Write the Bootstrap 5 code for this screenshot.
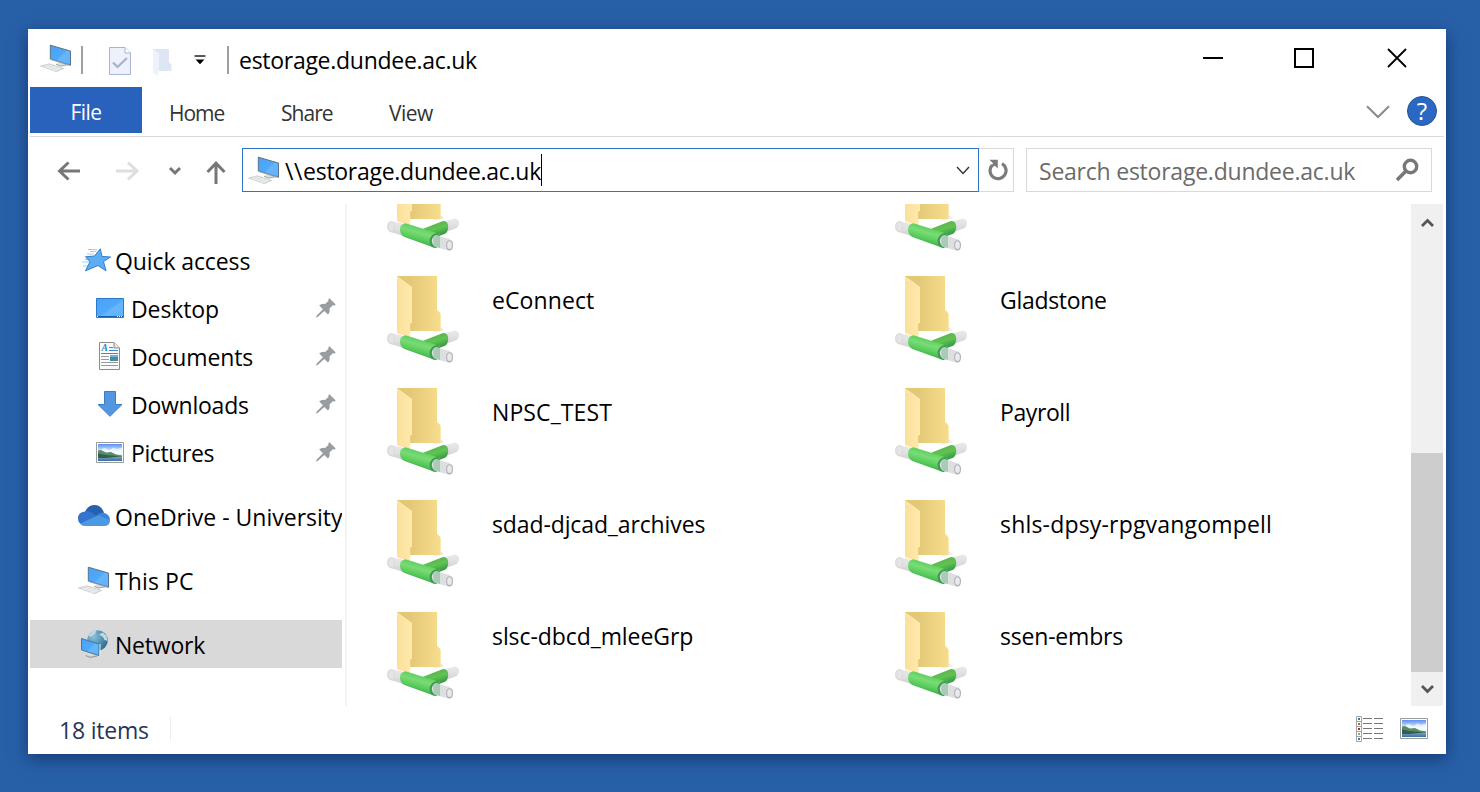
<!DOCTYPE html>
<html lang="en">
<head>
<meta charset="utf-8">
<title>estorage.dundee.ac.uk</title>
<link href="https://cdn.jsdelivr.net/npm/bootstrap@5.3.0/dist/css/bootstrap.min.css" rel="stylesheet">
<style>
body{background:#2860a8;font-family:"Open Sans",sans-serif;font-size:23px;line-height:1;color:#000;height:792px;overflow:hidden}
svg{display:block;flex:none}
.win{margin:29px 34px 0 28px;width:1418px;height:725px;background:#fff;box-shadow:0 5px 16px rgba(0,20,60,.5)}
.titlebar{height:58px;padding-left:13px}
.vbar{width:2px;height:28px;background:#a0a0a0}
.ribbon{height:50px;border-bottom:1px solid #d9dadb;margin:0 2px;font-size:21px;color:#333}
.filetab{width:112px;height:46px;background:#2862bd;color:#fff;padding:4px 0 0;letter-spacing:-.5px}
.addr{height:67px}
.field{height:44px;margin-top:11px;border:1px solid #d9d9d9}
.path{width:737px;border-color:#2f74c8;padding-left:6px}
.caret{width:1px;height:32px;background:#000}
.search{width:406px;color:#6b6b6b;padding-left:12px}
.tight{letter-spacing:-.28px}
.main{height:502px}
.side{width:314px;padding:32px 0 0 2px;letter-spacing:-.1px}
.item{height:48px;line-height:50px;white-space:nowrap;overflow:hidden}
.item.sub{padding-left:66px}
.item.top{padding-left:48px}
.sel{background:#d9d9d9}
.pinic{margin-right:6px}
.divide{width:2px;background:#f4f4f5;margin-left:3px}
.files{padding-left:40px}
.files .row{margin:0;height:112px}
.shift{margin-top:-40px}
.cell{width:508px}
.cell span{margin-left:33px;margin-top:13px}
.scroll{width:32px;background:#f0f0f0;margin-right:3px}
.thumb{height:219px;background:#cdcdcd;margin-top:212px}
.status{height:48px;color:#263559}
.t{white-space:pre;display:block}
.help{width:30px;height:30px;margin:9px 7px 0 17px;background:#2b68c3;border:1px solid #27548f;color:#fff;font-size:24px;line-height:28px;text-align:center}
</style>
</head>
<body>
<svg width="0" height="0" class="position-absolute">
<defs>
<linearGradient id="scr" x1="0" y1="0" x2="1" y2="1"><stop offset="0" stop-color="#47a2f8"/><stop offset=".5" stop-color="#50a8fa"/><stop offset=".58" stop-color="#66b6fc"/><stop offset="1" stop-color="#5fb1fc"/></linearGradient>
<linearGradient id="fb" x1="0" x2="1"><stop offset=".3" stop-color="#e5c877"/><stop offset="1" stop-color="#f6dd8c"/></linearGradient>
<linearGradient id="ff" x1="0" x2="1"><stop offset="0" stop-color="#fbe09b"/><stop offset="1" stop-color="#ffe9ad"/></linearGradient>
<linearGradient id="gr" gradientUnits="userSpaceOnUse" x1="33" y1="63" x2="28.500" y2="79"><stop offset="0" stop-color="#5fce5f"/><stop offset=".35" stop-color="#78dc77"/><stop offset=".7" stop-color="#5bcb5d"/><stop offset="1" stop-color="#3fb048"/></linearGradient>
<linearGradient id="gb" gradientUnits="userSpaceOnUse" x1="46" y1="60" x2="50" y2="73"><stop offset="0" stop-color="#56b84c"/><stop offset=".4" stop-color="#62c352"/><stop offset="1" stop-color="#2f9643"/></linearGradient>
<linearGradient id="wh" x1="0" y1="0" x2="0" y2="1"><stop offset="0" stop-color="#e8e8ea"/><stop offset=".5" stop-color="#e0e1e3"/><stop offset="1" stop-color="#cfd1d3"/></linearGradient>
<linearGradient id="sky" x1="0" y1="0" x2="0" y2="1"><stop offset="0" stop-color="#5b8ff2"/><stop offset=".7" stop-color="#e8f4fd"/></linearGradient>
<linearGradient id="sea" x1="0" y1="0" x2="0" y2="1"><stop offset="0" stop-color="#8fb3d6"/><stop offset="1" stop-color="#3a6f9e"/></linearGradient>
<radialGradient id="globe" cx=".3" cy=".3" r=".8"><stop offset="0" stop-color="#8fc0d8"/><stop offset=".6" stop-color="#4d8fb2"/><stop offset="1" stop-color="#2d668a"/></radialGradient>
<symbol id="pc" viewBox="0 0 32 28">
<path d="M.5 22 9.500 19.800 23.500 24.600 16.500 27.700Z" fill="#d3d6d8" stroke="#bbbfc2" stroke-width=".6"/>
<path d="M5 21.300 19.500 26M3.200 22 17.500 26.800M7.500 20.600 21.500 25.200M5 24 12 21M9 25.400 16 22.400M13 26.800 20 23.600" stroke="#f4f4f5" stroke-width=".7" fill="none"/>
<path d="M15.500 20 20 18.500 27.500 20.500 20.500 22.800Z" fill="#dcdfe0"/><path d="M16 20.300 20.500 22 28 20.800" stroke="#a3a8ab" fill="none"/>
<path d="M10.300 1.200 30.500 7.100V21.200L10.300 15Z" fill="url(#scr)" stroke="#55738a" stroke-width="1"/>
<path d="M10.500 15.500 30.600 21.600" stroke="#9da9b0" stroke-width=".8"/>
</symbol>
<symbol id="folder" viewBox="0 0 72 87">
<path d="M53 51 58 54 45 57Z" fill="#ececee"/>
<path d="M10 0H40V34L43.400 37.500V55H22Z" fill="url(#fb)"/>
<path d="M10 .5H40" stroke="#f0d78f"/>
<path d="M10 0 25 10.500V46.500L23.300 48V61.500L18 60 10 57Z" fill="url(#ff)"/>
<path d="M10 1 25 11.300V47" fill="none" stroke="#fff0bd" stroke-width=".7"/>
<path d="M40 0H50V34L53.400 37.500V55H40Z" fill="#f5dc8b"/>
<path d="M25 11V46.500L23.300 48V55H53.400V37.500L50 34V0H10Z" fill="url(#fb)"/>
<path d="M4 57Q0 58 0 62.300T3 68L17 72V60Z" fill="url(#wh)"/><ellipse cx="4.300" cy="62.500" rx="3.400" ry="4.800" fill="#e4e4e6" stroke="#d3d4d7" stroke-width=".7"/>
<path d="M58 57.200 68.500 54.500Q72 55.800 72 59.300T69.500 64.200L58 68Z" fill="url(#wh)"/>
<path d="M33 66 56 57Q61.200 57 61.200 62.500T58 69.800L44 75Z" fill="url(#gb)"/>
<path d="M18.500 59.300Q13 60 13 65.500T17.500 73L46 83.200 53 70Z" fill="url(#gr)"/>
<path d="M50.500 69Q43.500 70 42.600 76.500 42.600 84.300 49 84L52.500 81V71Z" fill="#3b9a55"/>
<path d="M49 71 63 75.300V86.900L48 82.800Q44.500 80 44.800 76.500T49 71Z" fill="#dcdedf"/>
<path d="M49 71 53 72.500V84.100L48 82.800Q43.500 76 49 71Z" fill="#a9cbb5"/>
<ellipse cx="62.200" cy="81.200" rx="4" ry="5.700" fill="#e2e3e5"/><ellipse cx="62.500" cy="81.200" rx="2.900" ry="4.400" fill="#eaeaec" stroke="#aeb1b4" stroke-width="1.100"/>
</symbol>
<symbol id="pic" viewBox="0 0 28 21">
<path d="M.5.5H27.500V20.500H.5Z" fill="#fff" stroke="#9b9b9b"/><path d="M2 2H26V13H2Z" fill="url(#sky)"/>
<path d="M5 8Q8 4.500 11 7T17 5.500L21 7 26 5.500V12H6Z" fill="#fff" opacity=".6"/>
<path d="M2 13.500H26V19H2Z" fill="url(#sea)"/><path d="M2 8.500 5 8 10 10.500 15 10 20 12.500 26 13.500V15H2Z" fill="#5d8a66"/><path d="M2 11.500 10 13 18 13.700 24 14.500 10 16H2Z" fill="#315f4c"/>
</symbol>
<symbol id="pin" viewBox="0 0 20 20"><path d="M13.500.3 19.700 6.400 18.500 7.600 16.800 7.300 13.500 10.600Q14.300 14.500 12 16.500L8.300 13 2 18.800.2 19.600.3 18 6.900 11.300 3.200 7.400Q5.500 5.200 9.200 6L12.500 2.700 12.200 1.400Z" fill="#969da3"/></symbol>
</defs>
</svg>

<div class="win d-flex flex-column">
  <header class="titlebar d-flex align-items-center">
    <svg width="32" height="28" style="margin-left:-1px"><use href="#pc"/></svg>
    <div class="vbar" style="margin:4px 26px 0 9px"></div>
    <svg width="22" height="28" viewBox="0 0 22 28" style="margin-top:5px"><path d="M.5.5H16L21.500 6V27.500H.5Z" fill="#edf1fb" stroke="#a8b5d0"/><path d="M16 .5V6H21.500" fill="#fff" stroke="#a8b5d0"/><path d="M4 15.500 8.500 20 18 11" fill="none" stroke="#a4b3cd" stroke-width="2.200"/></svg>
    <svg width="19" height="27" viewBox="0 0 19 27" style="margin:8px 0 0 22px"><path d="M0 0H16V13L18.500 15.500V22H5Z" fill="#dfe6f3"/><path d="M0 0 6 4V21L5 27 0 24Z" fill="#eef2fa"/></svg>
    <svg width="12" height="10" viewBox="0 0 12 10" style="margin:4px 21px 0 22px"><path d="M.5 1H11.500" stroke="#000" stroke-width="1.300"/><path d="M1.500 4.500H10.500L6 9.300Z"/></svg>
    <div class="vbar" style="margin:4px 10px 0 0"></div>
    <span class="t tight" style="padding-top:4px">estorage.dundee.ac.uk</span>
    <svg class="ms-auto" width="205" height="22" viewBox="0 0 205 22" fill="none" stroke="#000" stroke-width="2" style="margin-right:38px"><path d="M0 11H20M92 2H110V20H92Z"/><path d="M185 2 203 20M203 2 185 20" stroke-width="1.800"/></svg>
  </header>

  <nav class="ribbon d-flex">
    <div class="filetab d-flex align-items-center justify-content-center">File</div>
    <div class="d-flex align-items-center" style="height:52px">
      <span style="margin-left:27px;width:112px;letter-spacing:-1px">Home</span><span style="width:108px;letter-spacing:-.95px">Share</span><span style="letter-spacing:-.5px">View</span>
    </div>
    <svg class="ms-auto" width="24" height="14" viewBox="0 0 24 14" style="margin-top:18px"><path d="M1 1.200 12 12 23 1.200" fill="none" stroke="#8b8b8b" stroke-width="2"/></svg>
    <div class="help rounded-circle">?</div>
  </nav>

  <div class="addr d-flex">
    <svg width="170" height="24" viewBox="0 0 170 24" fill="none" stroke="#777" stroke-width="3" style="margin:23px 15px 0 29px"><path d="M11.500 2.500 2.500 11 11.500 19.500M3 11H23"/><path d="M71 2.500 80 11 71 19.500M79 11H59" stroke="#dedede"/><path d="M113 8 118 13 123 8"/><path d="M150.500 12 159 3.200 167.500 12M159 4V24"/></svg>
    <div class="field path d-flex align-items-center">
      <svg width="32" height="28" style="margin-left:-1px"><use href="#pc"/></svg><span class="t" style="margin:3px 0 0 5px;letter-spacing:-.28px"><span style="letter-spacing:.6px">\\</span>estorage.dundee.ac.uk</span><div class="caret"></div>
      <svg class="ms-auto" width="14" height="9" viewBox="0 0 14 9" style="margin-right:8px"><path d="M1 1 7 7.500 13 1" fill="none" stroke="#333" stroke-width="1.400"/></svg>
    </div>
    <div class="field border-start-0 d-flex align-items-center justify-content-center" style="width:35px;padding-left:3px"><svg width="20" height="22" viewBox="0 0 20 22"><path d="M4.200 6.200A8 8 0 1 0 14 4.700" fill="none" stroke="#7b7b7b" stroke-width="3.200"/><path d="M1.500.8H9.800V9.500L6.800 6.800 4.500 8 3 6.500 5.200 4.500Z" fill="#7b7b7b"/></svg></div>
    <div class="field search d-flex align-items-center" style="margin-left:12px"><span class="t" style="padding-top:3px;letter-spacing:-.23px">Search estorage.dundee.ac.uk</span>
      <svg class="ms-auto" width="24" height="24" viewBox="0 0 24 24" style="margin-right:12px"><g fill="none" stroke="#777"><circle cx="15.500" cy="8.500" r="6.200" stroke-width="3.400"/><path d="M11 13 2 22" stroke-width="3.600"/></g></svg>
    </div>
  </div>

  <main class="main d-flex">
    <aside class="side">
      <div class="item top d-flex"><svg class="align-self-center" width="37" height="24" viewBox="-3 0 37 24"><path d="M7 1.500H16M6 6H13M1 14H9M2 18H8M9 3.500H15M4 11.500H9" stroke="#9fd0f6" stroke-width="1"/><path d="M19.300.8 21 8.400 29.600 9 22.500 13.500 25 22.800 17 17.500 4.500 22.800 9 13.700 4.500 8.800 13.500 8Z" fill="#5cadf2" stroke="#2f7fcb"/></svg><span>Quick access</span></div>
      <div class="item sub d-flex"><svg class="align-self-center" width="35" height="20" viewBox="0 0 35 20"><path d="M.5.5H27.500V19.500H.5Z" fill="url(#scr)" stroke="#2d77c7"/><path d="M1 18.500H27" stroke="#155fae"/><path d="M1 18.500H3M21 18.500H27" stroke="#fff" stroke-dasharray="1 1"/></svg><span>Desktop</span><svg class="ms-auto align-self-center pinic" width="20" height="20"><use href="#pin"/></svg></div>
      <div class="item sub d-flex"><svg class="align-self-center" width="35" height="28" viewBox="0 0 35 28"><path d="M3.500.5H18L23.500 6V27.500H3.500Z" fill="#fafafa" stroke="#8b8e90"/><path d="M18 .5V6H23.500" fill="#e3e5e6" stroke="#8b8e90"/><text x="5.500" y="8.800" font-family="Liberation Serif" font-style="italic" font-weight="bold" font-size="9.500" fill="#2b80cb">A</text><path d="M13 5.500H17M13 8.500H22M5 11.500H22" stroke="#398bd5"/><path d="M5 14.500H13M5 17.500H13M5 20.500H22M5 23.500H22" stroke="#989b9d"/><path d="M14 13H22V19H14Z" fill="#478d93"/><path d="M14 13H22V15H14Z" fill="#78aceb"/></svg><span>Documents</span><svg class="ms-auto align-self-center pinic" width="20" height="20"><use href="#pin"/></svg></div>
      <div class="item sub d-flex"><svg class="align-self-center" width="35" height="28" viewBox="0 0 35 28"><path d="M8.500 1.500H19.500V14.500H26L14 26.300 2 14.500H8.500Z" fill="#5397e0" stroke="#3d7dc4"/></svg><span style="letter-spacing:-.25px">Downloads</span><svg class="ms-auto align-self-center pinic" width="20" height="20"><use href="#pin"/></svg></div>
      <div class="item sub d-flex"><svg class="align-self-center" width="28" height="21" style="margin-right:7px"><use href="#pic"/></svg><span style="letter-spacing:-.4px">Pictures</span><svg class="ms-auto align-self-center pinic" width="20" height="20"><use href="#pin"/></svg></div>
      <div class="item top d-flex mt-3"><svg class="align-self-center" width="37" height="22" viewBox="0 0 37 22"><path d="M7 7Q10 0 16.500 0 23 0 26 7.500L20 12 7 9Z" fill="#2860b0"/><path d="M5 20.500Q0 18 0 13.500 0 7 7 6.500 11 5.500 15 8.500L21 12 5 20.500Z" fill="#3374cc"/><path d="M18.500 11Q22 6.500 26.500 8 31.500 9.500 32 14.500L27 18Z" fill="#3a85dc"/><path d="M2.500 18.500 20 10.300 32 15Q32 21 26 21H7Q4 21 2.500 18.500Z" fill="#4a99e2"/></svg><span style="letter-spacing:0">OneDrive - University</span></div>
      <div class="item top d-flex mt-3"><svg class="align-self-center" width="32" height="28" style="margin-right:5px"><use href="#pc"/></svg><span style="letter-spacing:.1px">This PC</span></div>
      <div class="item top d-flex mt-3 sel"><svg class="align-self-center" width="37" height="28" viewBox="0 0 37 28"><circle cx="19.500" cy="10.500" r="10.300" fill="url(#globe)"/><path d="M11 5Q15 0 18.500.8L17 4 12 7ZM21 4.500 25 2.500 28.500 6 29.500 11 26.500 10 25 7Z" fill="#bcdce5"/><path d="M7.500 25.500 12 27.300 19 26" fill="none" stroke="#9ea5aa" stroke-width="1.300"/><path d="M3.500 8.500 21 14V25.500L3.500 20Z" fill="url(#scr)" stroke="#47779c"/><path d="M22 14V25.500" stroke="#e7f3f7"/></svg><span style="letter-spacing:-.2px">Network</span></div>
    </aside>
    <div class="divide"></div>
    <section class="files overflow-hidden flex-grow-1"><div class="shift" id="grid"></div></section>
    <div class="scroll"><svg width="32" height="37" viewBox="0 0 32 37"><path d="M11 22 16.500 16.500 22 22" fill="none" stroke="#555" stroke-width="2.800"/></svg><div class="thumb"></div><svg width="32" height="34" viewBox="0 0 32 34"><path d="M11 14 16.500 19.500 22 14" fill="none" stroke="#555" stroke-width="2.800"/></svg></div>
  </main>

  <footer class="status d-flex align-items-center"><span class="t" style="margin-left:31px;width:111px;letter-spacing:-.2px">18 items</span><div style="width:1px;height:24px;background:#eee;margin-bottom:3px"></div>
    <svg class="ms-auto" width="28" height="26" viewBox="0 0 28 26" style="margin:0 16px 2px 0"><path d="M.5.500H5.500V25.500H.5ZM.5 5.500H5.500M.5 10.500H5.500M.5 15.500H5.500M.5 20.500H5.500" fill="#fff" stroke="#a5a5a5"/><path d="M7 2.500H16M7 7.500H16M7 12.500H16M7 17.500H16M7 22.500H16M18 2.500H27M18 7.500H27M18 12.500H27M18 17.500H27M18 22.500H27" stroke="#777"/><path d="M2 2H4V4H2ZM2 22H4V24H2Z" fill="#3b79aa"/><path d="M2 7H4V9H2Z" fill="#94774b"/><path d="M2 12H4V14H2Z" fill="#c22727"/><path d="M2 17H4V19H2Z" fill="#86b26a"/></svg>
    <svg width="28" height="21" style="margin:0 18px 3px 0"><use href="#pic"/></svg>
  </footer>
</div>
<script src="https://cdn.jsdelivr.net/npm/bootstrap@5.3.0/dist/js/bootstrap.bundle.min.js"></script>
<script>
// each entry: share name, letter spacing in px
const rows=[[["",0],["",0]],[["eConnect",.1],["Gladstone",-.3]],[["NPSC_TEST",.1],["Payroll",-.4]],[["sdad-djcad_archives",-.12],["shls-dpsy-rpgvangompell",.18]],[["slsc-dbcd_mleeGrp",-.08],["ssen-embrs",-.2]]];
document.getElementById("grid").innerHTML=rows.map(r=>'<div class="row flex-nowrap">'+r.map(n=>'<div class="cell d-flex p-0"><svg width="72" height="87"><use href="#folder"/></svg><span style="letter-spacing:'+n[1]+'px">'+n[0]+'</span></div>').join("")+'</div>').join("");
</script>
</body>
</html>
